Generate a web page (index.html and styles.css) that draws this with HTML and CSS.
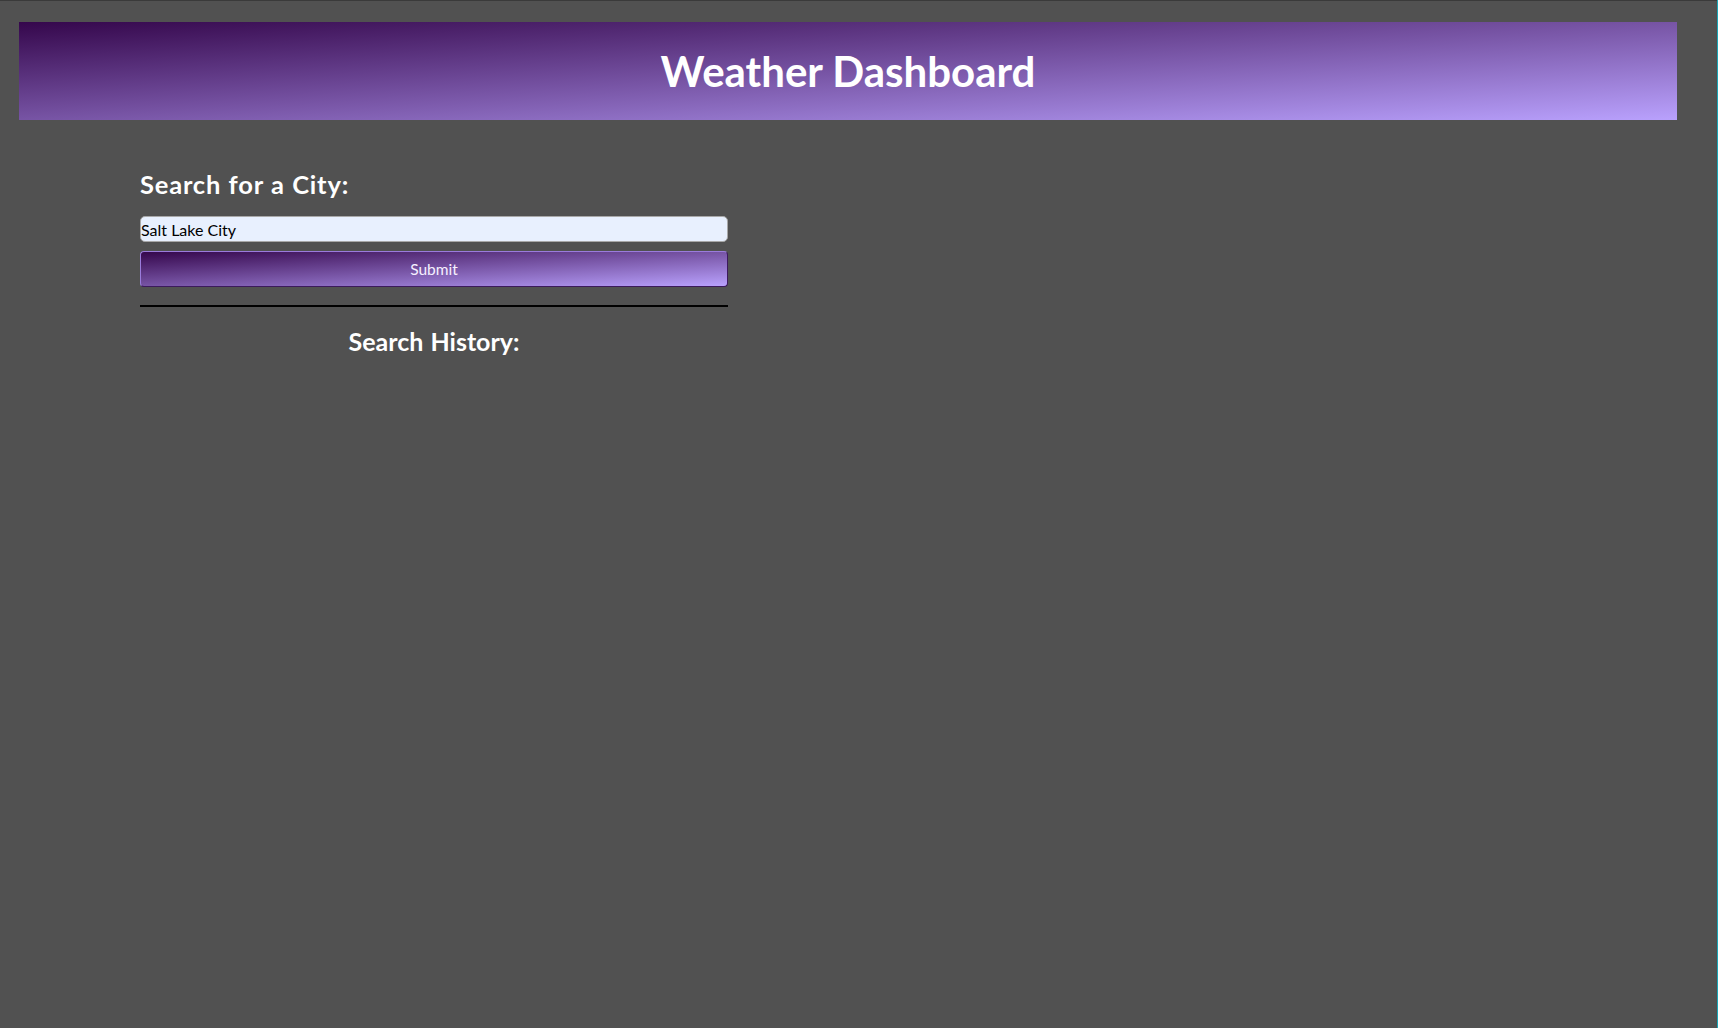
FILE: index.html
```html
<!DOCTYPE html>
<html lang="en">
<head>
<meta charset="utf-8">
<title>Weather Dashboard</title>
<link rel="stylesheet" href="styles.css">
</head>
<body>
  <header class="hero">
    <h1 class="hero-title">Weather Dashboard</h1>
  </header>
  <main class="content">
    <section class="search">
      <h2 class="search-label">Search for a City:</h2>
      <input class="city-input" type="text" value="Salt Lake City">
      <button class="submit-btn" type="button">Submit</button>
      <div class="divider"></div>
      <h2 class="history-title">Search History:</h2>
    </section>
  </main>
</body>
</html>
```
FILE: styles.css
```css
html, body {
  margin: 0;
  padding: 0;
}
body {
  background: #515151;
  min-height: 1028px;
  font-family: Lato, "Open Sans", sans-serif;
  color: #ffffff;
  padding-top: 22px;
  box-sizing: border-box;
}
body::before {
  content: "";
  position: fixed;
  left: 0;
  right: 0;
  top: 0;
  height: 1px;
  background: #3a3a3a;
}
body::after {
  content: "";
  position: fixed;
  right: 0;
  top: 0;
  bottom: 0;
  width: 1px;
  background: #1aa6b6;
}
.hero {
  margin: 0 0 0 19px;
  width: 1658px;
  height: 98px;
  display: flex;
  align-items: center;
  justify-content: center;
  background: linear-gradient(to bottom right, #35074c, #b9a1fd);
}
.hero-title {
  margin: 0;
  font-size: 42px;
  line-height: 50px;
  font-weight: 700;
  color: #ffffff;
}
.content {
  padding-left: 140px;
}
.search {
  width: 588px;
  display: flex;
  flex-direction: column;
}
.search-label {
  margin: 49px 0 0 0;
  font-size: 25.5px;
  line-height: 30px;
  font-weight: 700;
  letter-spacing: 0.8px;
  word-spacing: 0.5px;
}
.city-input {
  margin-top: 17px;
  height: 26px;
  box-sizing: border-box;
  width: 588px;
  padding: 0;
  border: 1px solid #a8a8a8;
  border-radius: 5px;
  background: #e8f0fe;
  color: #000000;
  font-family: Lato, "Open Sans", sans-serif;
  font-size: 16px;
}
.submit-btn {
  margin-top: 9px;
  height: 36px;
  width: 588px;
  box-sizing: border-box;
  border: 1px solid;
  border-color: #9a7cdc #3c1a5c #3c1a5c #9a7cdc;
  border-radius: 4px;
  background: linear-gradient(to bottom right, #35074c, #b9a1fd);
  color: #f6f0ff;
  font-family: Lato, "Open Sans", sans-serif;
  font-size: 15.5px;
  padding: 0;
}
.divider {
  margin-top: 18px;
  height: 2px;
  background: #000000;
}
.history-title {
  margin: 19px 0 0 0;
  text-align: center;
  font-size: 25px;
  line-height: 30px;
  font-weight: 700;
  word-spacing: 1px;
}
```
